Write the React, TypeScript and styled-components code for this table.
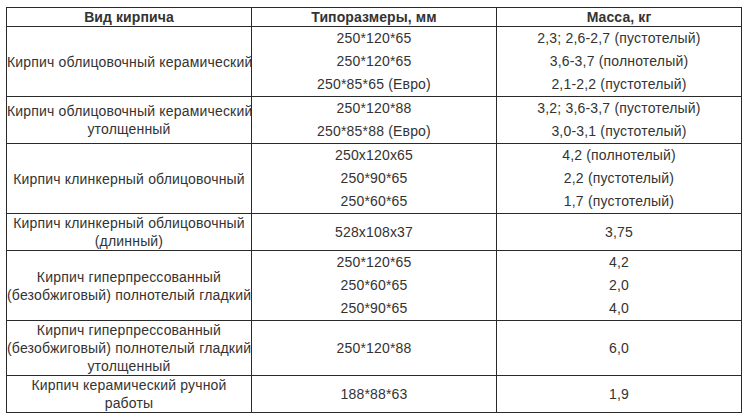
import React from "react";
import styled, { createGlobalStyle } from "styled-components";

const Global = createGlobalStyle`
  html, body { margin: 0; padding: 0; background: #fff; }
  body { font-family: Arial, "Liberation Sans", sans-serif; color: #333; }
`;

const Page = styled.div`
  padding: 7px 0 0 6px;
`;

const Table = styled.table`
  border-collapse: collapse;
  table-layout: fixed;
  width: 736px;
  font-family: Arial, "Liberation Sans", sans-serif;
  font-size: 14px;
  color: #333;
`;

const Col = styled.col`
  width: 245px;
`;

const Th = styled.th`
  border: 1px solid #2a2a2a;
  font-weight: bold;
  font-size: 14px;
  line-height: 18px;
  height: 18px;
  padding: 0;
  text-align: center;
  color: #333;
  letter-spacing: 0.1px;
`;

const Td = styled.td`
  border: 1px solid #2a2a2a;
  padding: 0;
  text-align: center;
  vertical-align: middle;
  line-height: 18px;
  white-space: nowrap;
  letter-spacing: 0.18px;
`;

const Value = styled.div`
  line-height: 23px;
  height: 23px;
  white-space: nowrap;
`;

type Row = { name: string[]; sizes: string[]; masses: string[] };

const rows: Row[] = [
  {
    name: ["Кирпич облицовочный керамический"],
    sizes: ["250*120*65", "250*120*65", "250*85*65 (Евро)"],
    masses: ["2,3; 2,6-2,7 (пустотелый)", "3,6-3,7 (полнотелый)", "2,1-2,2 (пустотелый)"],
  },
  {
    name: ["Кирпич облицовочный керамический", "утолщенный"],
    sizes: ["250*120*88", "250*85*88 (Евро)"],
    masses: ["3,2; 3,6-3,7 (пустотелый)", "3,0-3,1 (пустотелый)"],
  },
  {
    name: ["Кирпич клинкерный облицовочный"],
    sizes: ["250x120x65", "250*90*65", "250*60*65"],
    masses: ["4,2 (полнотелый)", "2,2 (пустотелый)", "1,7 (пустотелый)"],
  },
  {
    name: ["Кирпич клинкерный облицовочный", "(длинный)"],
    sizes: ["528x108x37"],
    masses: ["3,75"],
  },
  {
    name: ["Кирпич гиперпрессованный", "(безобжиговый) полнотелый гладкий"],
    sizes: ["250*120*65", "250*60*65", "250*90*65"],
    masses: ["4,2", "2,0", "4,0"],
  },
  {
    name: ["Кирпич гиперпрессованный", "(безобжиговый) полнотелый гладкий", "утолщенный"],
    sizes: ["250*120*88"],
    masses: ["6,0"],
  },
  {
    name: ["Кирпич керамический ручной", "работы"],
    sizes: ["188*88*63"],
    masses: ["1,9"],
  },
];

export default function App() {
  return (
    <>
      <Global />
      <Page>
        <Table>
          <colgroup>
            <Col />
            <Col />
            <Col />
          </colgroup>
          <thead>
            <tr>
              <Th>Вид кирпича</Th>
              <Th>Типоразмеры, мм</Th>
              <Th>Масса, кг</Th>
            </tr>
          </thead>
          <tbody>
            {rows.map((r, i) => (
              <tr key={i}>
                <Td>
                  {r.name.map((l, j) => (
                    <React.Fragment key={j}>
                      {j > 0 && <br />}
                      {l}
                    </React.Fragment>
                  ))}
                </Td>
                <Td>
                  {r.sizes.map((s, j) => (
                    <Value key={j}>{s}</Value>
                  ))}
                </Td>
                <Td>
                  {r.masses.map((s, j) => (
                    <Value key={j}>{s}</Value>
                  ))}
                </Td>
              </tr>
            ))}
          </tbody>
        </Table>
      </Page>
    </>
  );
}
